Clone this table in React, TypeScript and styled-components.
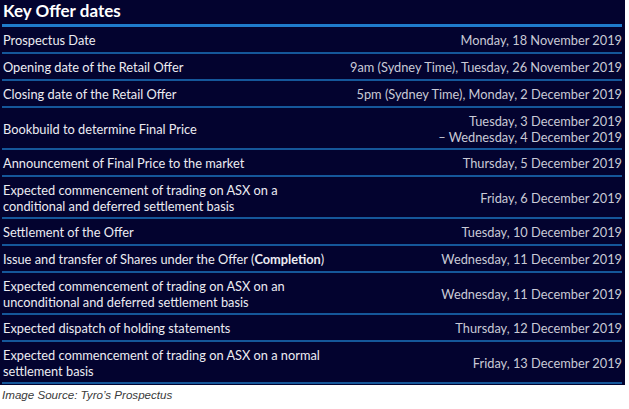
import React from "react";
import styled, { createGlobalStyle } from "styled-components";

const Global = createGlobalStyle`
  html, body { margin: 0; padding: 0; background: #ffffff; }
  body { font-family: "Lato", "Liberation Sans", sans-serif; }
`;

const Page = styled.div`
  width: 629px;
  height: 409px;
  display: flex;
  flex-direction: column;
`;

const Panel = styled.div`
  width: 625px;
  background: #03032f;
  padding: 0 3px 1px 2px;
  box-sizing: border-box;
  display: flex;
  flex-direction: column;
`;

const Title = styled.h2`
  margin: 0;
  height: 24px;
  padding-left: 1px;
  font-size: 17px;
  font-weight: 700;
  color: #ffffff;
  line-height: 22px;
`;

const TopRule = styled.div`
  height: 3px;
  background: #1f7ccc;
`;

const Row = styled.div<{ $tall?: boolean }>`
  display: flex;
  justify-content: space-between;
  align-items: center;
  height: ${(p) => (p.$tall ? 40 : 25)}px;
  border-bottom: 2px solid #15579a;
  padding: 0 0 0 1px;
  box-sizing: content-box;
  font-size: 12.8px;
  line-height: 16px;
`;

const Label = styled.div`
  color: #ececf2;
  max-width: 335px;
  padding-top: 1px;
`;

const Value = styled.div`
  color: #c9cad6;
  text-align: right;
  padding-top: 1px;
`;

const Caption = styled.div`
  margin-top: 3px;
  padding-left: 2px;
  font-family: "Liberation Sans Narrow", "Liberation Sans", sans-serif;
  font-style: italic;
  font-size: 11.6px;
  line-height: 14px;
  color: #3a3a3a;
`;

type Item = { label: React.ReactNode; value: React.ReactNode; tall?: boolean };

const items: Item[] = [
  { label: "Prospectus Date", value: "Monday, 18 November 2019" },
  { label: "Opening date of the Retail Offer", value: "9am (Sydney Time), Tuesday, 26 November 2019" },
  { label: "Closing date of the Retail Offer", value: "5pm (Sydney Time), Monday, 2 December 2019" },
  {
    label: "Bookbuild to determine Final Price",
    value: (
      <>
        Tuesday, 3 December 2019
        <br />– Wednesday, 4 December 2019
      </>
    ),
    tall: true,
  },
  { label: "Announcement of Final Price to the market", value: "Thursday, 5 December 2019" },
  {
    label: "Expected commencement of trading on ASX on a conditional and deferred settlement basis",
    value: "Friday, 6 December 2019",
    tall: true,
  },
  { label: "Settlement of the Offer", value: "Tuesday, 10 December 2019" },
  {
    label: (
      <>
        Issue and transfer of Shares under the Offer (<b>Completion</b>)
      </>
    ),
    value: "Wednesday, 11 December 2019",
  },
  {
    label: "Expected commencement of trading on ASX on an unconditional and deferred settlement basis",
    value: "Wednesday, 11 December 2019",
    tall: true,
  },
  { label: "Expected dispatch of holding statements", value: "Thursday, 12 December 2019" },
  {
    label: "Expected commencement of trading on ASX on a normal settlement basis",
    value: "Friday, 13 December 2019",
    tall: true,
  },
];

export default function App() {
  return (
    <Page>
      <Global />
      <Panel>
        <Title>Key Offer dates</Title>
        <TopRule />
        {items.map((it, i) => (
          <Row key={i} $tall={it.tall}>
            <Label>{it.label}</Label>
            <Value>{it.value}</Value>
          </Row>
        ))}
      </Panel>
      <Caption>Image Source: Tyro’s Prospectus</Caption>
    </Page>
  );
}
